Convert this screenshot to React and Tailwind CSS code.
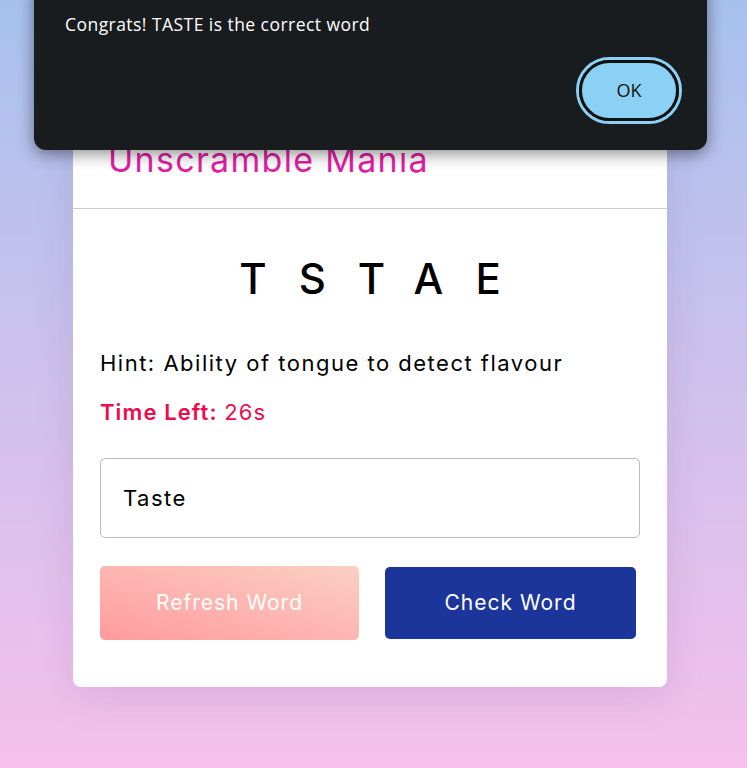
import { useState } from "react";

export default function App() {
    const [word, setWord] = useState("Taste");

    return (
        <div className="relative min-h-screen overflow-hidden bg-gradient-to-b from-[#a6c1ee] to-[#f5c0ec] font-['Inter',sans-serif]">
            <div className="flex justify-center pt-[112px] pr-[7px]">
                <div className="w-[594px] rounded-lg bg-white shadow-[0_10px_40px_rgba(90,40,110,0.12)]">
                    <div className="border-b border-[#ccc] px-[35px] pt-[22px] pb-[22px]">
                        <h2 className="text-[34px] leading-[52px] tracking-[1.3px] text-[#e21ea4]">Unscramble Mania</h2>
                    </div>
                    <div className="px-[27px] pt-[40px] pb-[47px]">
                        <p className="text-center text-[42px] font-medium leading-[60px] tracking-[32px] pl-[32px] text-black">TSTAE</p>
                        <p className="mt-[38px] text-[22px] leading-[32px] tracking-[1.5px] text-black">Hint: Ability of tongue to detect flavour</p>
                        <p className="mt-[17px] text-[22px] leading-[32px] tracking-[1.1px] text-[#ed0b4f]">
                            <span className="font-semibold">Time Left: </span>26s
                        </p>
                        <input
                            value={word}
                            onChange={(e) => setWord(e.target.value)}
                            className="mt-[30px] h-[80px] w-full rounded-[5px] border border-[#bbb] px-[22px] text-[22px] tracking-[1.5px] text-black outline-none"
                        />
                        <div className="mt-[28px] flex gap-[26px]">
                            <button className="h-[74px] w-[259px] rounded-[5px] bg-gradient-to-tr from-[#ff9a9e] to-[#fad0c4] text-[21px] tracking-[1px] text-white">
                                Refresh Word
                            </button>
                            <button className="mt-px h-[72px] w-[251px] rounded-[5px] bg-[#1b359b] text-[21px] tracking-[1px] text-white">
                                Check Word
                            </button>
                        </div>
                    </div>
                </div>
            </div>

            <div className="absolute left-[34px] top-[-20px] h-[170px] w-[673px] rounded-xl bg-[#181c1f] shadow-[0_4px_16px_rgba(0,0,0,0.45)] font-['Open_Sans',sans-serif]">
                <p className="pl-[31px] pt-[31px] text-[17.5px] tracking-[0.45px] text-white">Congrats! TASTE is the correct word</p>
                <div className="absolute right-[25px] top-[77px] rounded-full border-[3px] border-[#8bd1f5]">
                    <button className="h-[61px] w-[100px] rounded-full border-[3px] border-[#111] bg-[#8bd1f5] text-[18px] text-[#111]">
                        OK
                    </button>
                </div>
            </div>
        </div>
    );
}
